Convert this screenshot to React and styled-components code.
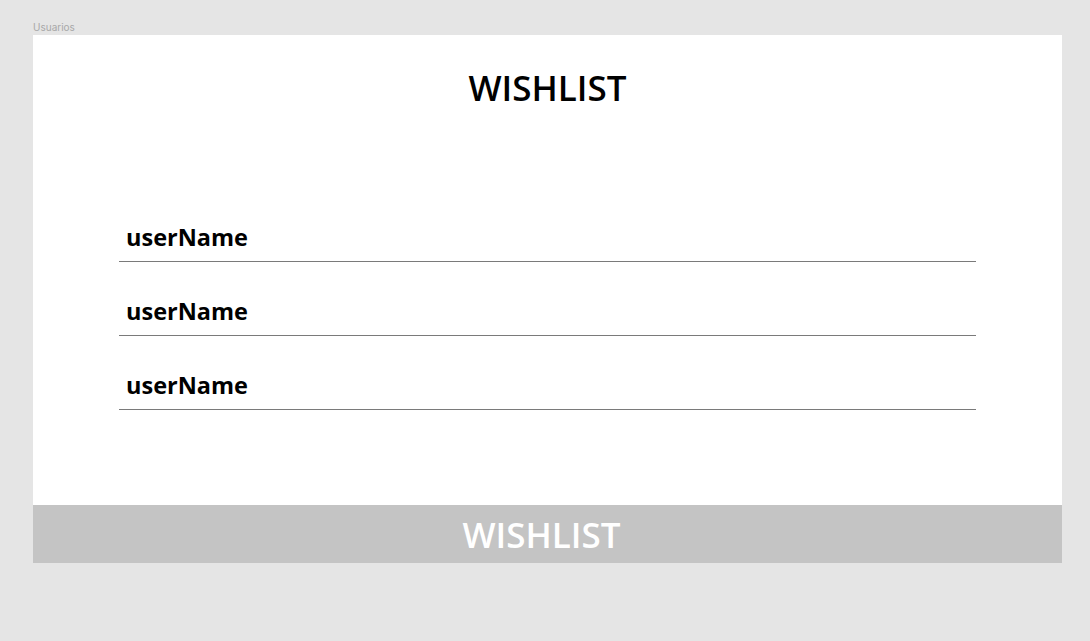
import React from "react";
import styled, { createGlobalStyle } from "styled-components";

const Global = createGlobalStyle`
  html, body { margin: 0; padding: 0; background: #e5e5e5; }
  body { font-family: "Open Sans", sans-serif; }
`;

const Page = styled.div`
  width: 1090px;
  height: 641px;
  background: #e5e5e5;
  padding: 19px 28px 0 33px;
  box-sizing: border-box;
`;

const FrameLabel = styled.div`
  font-family: Inter, sans-serif;
  font-size: 10px;
  line-height: 16px;
  color: #a8a8a8;
`;

const Frame = styled.div`
  width: 1029px;
  height: 528px;
  background: #ffffff;
  display: flex;
  flex-direction: column;
`;

const Main = styled.div`
  flex: 1;
  display: flex;
  flex-direction: column;
`;

const Title = styled.h1`
  margin: 0;
  padding-top: 29px;
  text-align: center;
  font-family: "Open Sans", sans-serif;
  font-weight: 600;
  font-size: 35px;
  line-height: 48px;
  color: #000;
`;

const List = styled.div`
  margin: 110px 86px 0 86px;
  display: flex;
  flex-direction: column;
`;

const Row = styled.div`
  height: 74px;
  box-sizing: border-box;
  display: flex;
  align-items: flex-end;
  padding: 0 0 8px 7px;
  border-bottom: 1px solid #7a7a7a;
  font-family: "Open Sans", sans-serif;
  font-weight: 700;
  font-size: 23.5px;
  line-height: 32px;
  color: #000;
  &:first-child { height: 40px; }
`;

const Footer = styled.div`
  height: 58px;
  background: #c4c4c4;
  display: flex;
  align-items: center;
  justify-content: center;
  padding-right: 12px;
  font-family: "Open Sans", sans-serif;
  font-weight: 600;
  font-size: 35px;
  color: #ffffff;
`;

export default function App() {
  const users = ["userName", "userName", "userName"];
  return (
    <>
      <Global />
      <Page>
        <FrameLabel>Usuarios</FrameLabel>
        <Frame>
          <Main>
            <Title>WISHLIST</Title>
            <List>
              {users.map((u, i) => (
                <Row key={i}>{u}</Row>
              ))}
            </List>
          </Main>
          <Footer>WISHLIST</Footer>
        </Frame>
      </Page>
    </>
  );
}
